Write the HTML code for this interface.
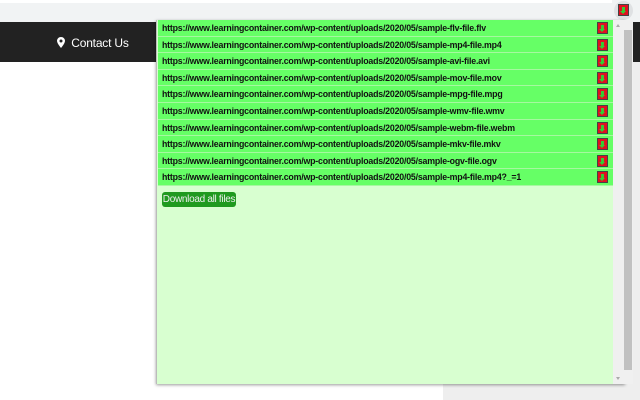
<!DOCTYPE html>
<html><head><style>
body{margin:0;width:640px;height:400px;overflow:hidden;position:relative;background:#fff;font-family:"Liberation Sans",Arial,sans-serif}
.top{position:absolute;left:0;top:0;width:640px;height:22px;background:#f1f3f4}
.top .w{position:absolute;left:0;top:0;width:612px;height:3px;background:#fff}
.hdr{position:absolute;left:0;top:22px;width:640px;height:40px;background:#222}
.contact{position:absolute;left:57px;top:36px;color:#fff;font-size:12px;letter-spacing:-0.2px}
.grey{position:absolute;left:443px;top:62px;width:197px;height:338px;background:#eee}
.extbg{position:absolute;left:614px;top:1px;width:19px;height:19px;border-radius:50%;background:#dfe1e3}
.ext{position:absolute;left:618px;top:4px;width:11px;height:12px;background:#e01020;border:1px solid #444;box-sizing:border-box}
.ext:after,.ic:after{content:"";position:absolute;left:3px;top:2px;width:3px;height:4px;background:#3c3}
.ext:before,.ic:before{content:"";position:absolute;left:1px;top:6px;border-left:3.5px solid transparent;border-right:3.5px solid transparent;border-top:3px solid #3c3}
.pop{position:absolute;left:156px;top:20px;width:468px;height:364px;background:#d8ffd0;border-left:1px solid #bbb;box-shadow:0 1px 3px rgba(0,0,0,.4)}
.row{position:absolute;left:1px;width:455px;height:15.6px;background:#6f6;border-bottom:1px solid #a6f8a0}
.row span{position:absolute;left:4px;top:3px;font-size:8.8px;letter-spacing:-0.2px;font-weight:bold;color:#111;white-space:nowrap}
.ic{position:absolute;left:439px;top:2px;width:11px;height:12px;background:#e01020;border:1px solid #444;box-sizing:border-box}
.btn{position:absolute;left:5px;top:172px;width:74px;height:15px;background:#1f9a1f;border-radius:3px;color:#eee;font-size:10px;letter-spacing:-0.3px;line-height:15px;text-align:center}
.sb{position:absolute;left:456px;top:0;width:11px;height:364px;background:#f0f0f0}
.sb2{position:absolute;left:622px;top:20px;width:11px;height:364px;background:#f0f0f0}
.thumb{position:absolute;left:624px;top:30px;width:8px;height:340px;background:#c1c1c1}
.dk{position:absolute;left:633px;top:25px;width:7px;height:37px;background:#222}
.ar{position:absolute;width:0;height:0;border-left:2.5px solid transparent;border-right:2.5px solid transparent}
</style></head><body>
<div class="top"><div class="w"></div></div>
<div class="hdr"></div>
<div class="contact"><svg width="8" height="11" viewBox="0 0 8 11" style="vertical-align:-1px"><path d="M4 0C1.8 0 0 1.7 0 3.9 0 6.5 4 11 4 11S8 6.5 8 3.9C8 1.7 6.2 0 4 0z" fill="#fff"/><circle cx="4" cy="4" r="1.5" fill="#222"/></svg>&nbsp; Contact Us</div>
<div class="grey"></div>
<div class="dk"></div>
<div class="extbg"></div>
<div class="ext"></div>
<div class="pop">
<div class="row" style="top:0"><span>https://www.learningcontainer.com/wp-content/uploads/2020/05/sample-flv-file.flv</span><i class="ic"></i></div>
<div class="row" style="top:16.6px"><span>https://www.learningcontainer.com/wp-content/uploads/2020/05/sample-mp4-file.mp4</span><i class="ic"></i></div>
<div class="row" style="top:33.2px"><span>https://www.learningcontainer.com/wp-content/uploads/2020/05/sample-avi-file.avi</span><i class="ic"></i></div>
<div class="row" style="top:49.8px"><span>https://www.learningcontainer.com/wp-content/uploads/2020/05/sample-mov-file.mov</span><i class="ic"></i></div>
<div class="row" style="top:66.4px"><span>https://www.learningcontainer.com/wp-content/uploads/2020/05/sample-mpg-file.mpg</span><i class="ic"></i></div>
<div class="row" style="top:83px"><span>https://www.learningcontainer.com/wp-content/uploads/2020/05/sample-wmv-file.wmv</span><i class="ic"></i></div>
<div class="row" style="top:99.6px"><span>https://www.learningcontainer.com/wp-content/uploads/2020/05/sample-webm-file.webm</span><i class="ic"></i></div>
<div class="row" style="top:116.2px"><span>https://www.learningcontainer.com/wp-content/uploads/2020/05/sample-mkv-file.mkv</span><i class="ic"></i></div>
<div class="row" style="top:132.8px"><span>https://www.learningcontainer.com/wp-content/uploads/2020/05/sample-ogv-file.ogv</span><i class="ic"></i></div>
<div class="row" style="top:149.4px"><span>https://www.learningcontainer.com/wp-content/uploads/2020/05/sample-mp4-file.mp4?_=1</span><i class="ic"></i></div>
<div class="btn">Download all files</div>
<div class="sb"><i class="ar" style="left:3px;top:4px;border-bottom:3px solid #aaa"></i><i class="ar" style="left:3px;top:357px;border-top:3px solid #aaa"></i></div>
</div>
<div class="sb2"></div>
<div class="thumb"></div>
</body></html>
